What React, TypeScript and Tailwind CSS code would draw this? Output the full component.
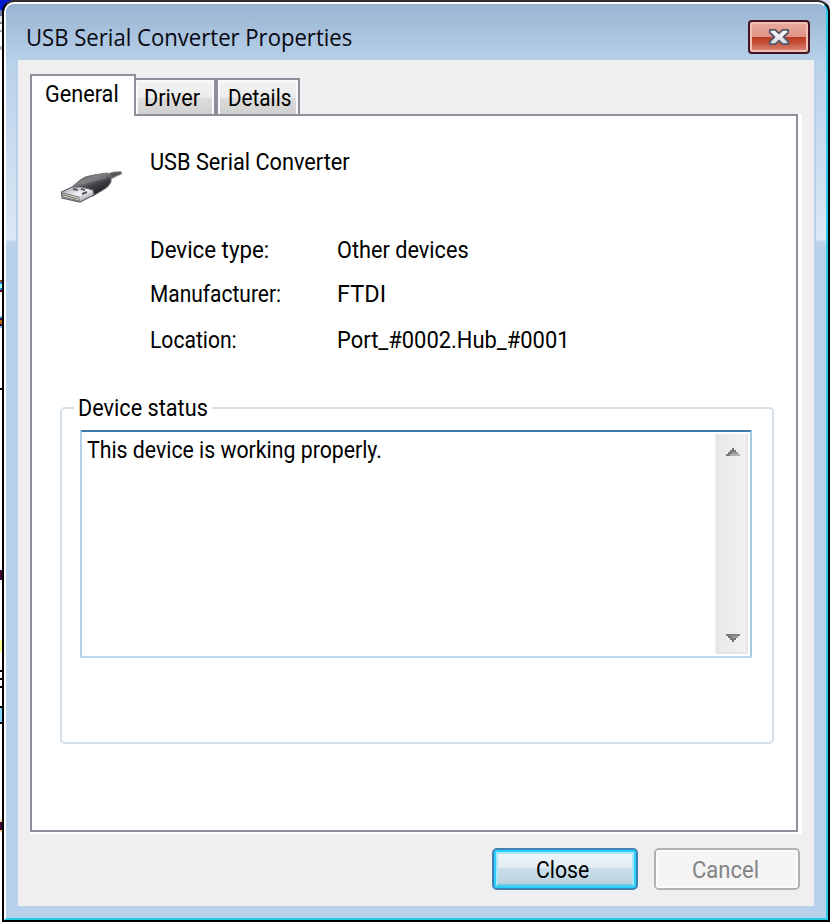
import { useLayoutEffect, useRef, useState } from "react";

const BODY = "font-['Roboto','Liberation_Sans',sans-serif] text-[24px] leading-[28px] text-black";
const TITLE = "font-['Open_Sans','Noto_Sans',sans-serif] text-[24px] leading-[28px] text-[#080810]";

/* One line of text condensed horizontally to a given width. */
function Line({ text, width, className = BODY }: { text: string; width: number; className?: string }) {
  const ref = useRef<HTMLSpanElement>(null);
  const [scale, setScale] = useState(1);
  useLayoutEffect(() => {
    if (ref.current) setScale(width / ref.current.offsetWidth);
  }, [width]);
  return (
    <span className="block h-[28px] shrink-0" style={{ width }}>
      <span
        ref={ref}
        className={"inline-block origin-left whitespace-nowrap " + className}
        style={{ transform: `scaleX(${scale})` }}
      >
        {text}
      </span>
    </span>
  );
}

const EDGE = [
  "h-[10px] bg-[#0018d0]", "h-[6px] bg-[#7078a8]", "h-[6px] bg-[#e4e4e4]", "h-[2px] bg-[#888]",
  "h-[6px] bg-white", "h-[2px] bg-[#aaa]", "h-[14px] bg-white", "h-[4px] bg-[#bbb]", "h-[230px] bg-white",
  "h-[2px] bg-[#984200]", "h-[2px] bg-[#288fe0]", "h-[4px] bg-[#9effff]", "h-[2px] bg-[#288fe0]", "h-[2px] bg-[#680000]",
  "h-[24px] bg-white", "h-[2px] bg-[#68b8ff]", "h-[2px] bg-[#400048]", "h-[4px] bg-[#b86800]", "h-[2px] bg-[#400048]", "h-[2px] bg-[#80c8ff]",
  "h-[60px] bg-white", "h-[2px] bg-black", "h-[180px] bg-white", "h-[10px] bg-[#400030]",
  "h-[60px] bg-white", "h-[12px] bg-[#ffff90]", "h-[18px] bg-white", "h-[2px] bg-black",
  "h-[6px] bg-white", "h-[2px] bg-black", "h-[6px] bg-white", "h-[2px] bg-black",
  "h-[18px] bg-white", "h-[2px] bg-black", "h-[14px] bg-[#88d8ff]", "h-[2px] bg-black",
  "h-[96px] bg-white", "h-[2px] bg-[#ffd090]", "h-[8px] bg-[#400030]", "h-[2px] bg-[#ffd090]",
];

function UsbPlug() {
  return (
    <svg width="64" height="36" viewBox="0 0 64 36" className="shrink-0">
      <defs>
        <linearGradient id="body" x1="0" y1="0" x2="0.6" y2="1">
          <stop offset="0" stopColor="#3d3d40" />
          <stop offset="0.4" stopColor="#848487" />
          <stop offset="0.65" stopColor="#3c3c42" />
          <stop offset="1" stopColor="#202026" />
        </linearGradient>
        <linearGradient id="metal" x1="0" y1="0" x2="1" y2="1">
          <stop offset="0" stopColor="#a0a0a6" />
          <stop offset="0.5" stopColor="#f4f4fa" />
          <stop offset="1" stopColor="#77777e" />
        </linearGradient>
      </defs>
      <path d="M47 6 53 4 61 3.500 62 6 57 8 51 11Z" fill="#55555a" stroke="#aaa" strokeWidth="1" />
      <path d="M12 19 20 12Q25 8 34 7L47 5 51 7 51 14Q49 19 43 22L33 28Z" fill="url(#body)" stroke="#707076" />
      <path d="M1.500 24 12 19 22 19 33 22 34 27 28 30 20 34 2 30Z" fill="url(#metal)" stroke="#606068" strokeWidth="1.200" />
      <path d="m3 25 16 4v4L3 29Z" fill="#c8c8c6" stroke="#606067" strokeWidth=".8" />
      <path d="m13 21 5 1m3-1 4 1m-3 4 5-2" stroke="#57575e" strokeWidth="2" />
      <path d="m4 27 13 4" stroke="#7e7850" />
      <path d="m22 16 16-5 8-2" stroke="#a0a0a3" fill="none" opacity=".5" />
    </svg>
  );
}

function Tab({ text, width, className, pad }: { text: string; width: number; className: string; pad: string }) {
  return (
    <div className={"flex h-[36px] shrink-0 border-t-2 border-[#8c8f9a] " + className}>
      <div className={"flex flex-1 border-x-2 border-t-2 border-[#fafafa] bg-[linear-gradient(to_bottom,#f2f2f2_0%,#ebebeb_48%,#dddddd_50%,#cfcfcf_100%)] pt-[2px] " + pad}>
        <Line text={text} width={width} />
      </div>
    </div>
  );
}

function Field({ label, labelWidth, value, width, className }: { label: string; labelWidth: number; value: string; width: number; className: string }) {
  return (
    <div className={"grid shrink-0 grid-cols-[187px_1fr] pl-[118px] " + className}>
      <Line text={label} width={labelWidth} />
      <Line text={value} width={width} />
    </div>
  );
}

function Arrow({ down = false }: { down?: boolean }) {
  return (
    <svg width="14" height="8" viewBox="0 0 14 8" shapeRendering="crispEdges" className={down ? "-scale-y-100" : ""}>
      <path d="M6 0h2v2H6z" fill="#737373" />
      <path d="M4 2h6v2H4z" fill="#777" />
      <path d="M2 4h10v2H2z" fill="#999" />
      <path d="M0 6h14v2H0z" fill={down ? "#808080" : "#b2b2b2"} />
      <path d="M0 6h4v2H0zM2 4h4v2H2z" fill="#777" />
    </svg>
  );
}

function SideGlass({ right = false }: { right?: boolean }) {
  return (
    <div className={"w-[12px] shrink-0 " + (right ? "pl-[2px]" : "pr-[2px]")}>
      <div className="h-[182px] border-b-2 border-[#c8dcf0] bg-linear-to-b from-[#b9d1ea] to-[#dce8f5]" />
    </div>
  );
}

export default function App() {
  return (
    <div className="flex h-[924px] w-[830px] overflow-hidden bg-white">
      <div className="flex w-[2px] shrink-0 flex-col">
        {EDGE.map((c, i) => <div key={i} className={"shrink-0 " + c} />)}
      </div>
      <div className="h-[922px] w-[828px] bg-linear-to-r from-[#0018d0] from-50% to-[#dcdcf4] to-50%">
        <div className="h-full rounded-t-[12px] border-2 border-black border-t-[#332f31] bg-black">
          <div className="flex h-full flex-col rounded-t-[10px] border-2 border-t-white border-r-[#2bcbed] border-b-[#27cbe0] border-l-white bg-[#b9d1ea]">
            <header className="flex h-[56px] shrink-0 items-start justify-between rounded-t-[8px] bg-linear-to-b from-[#99b4d1] to-[#b7cfe9] pl-[20px] pr-[16px]">
              <div className="pt-[19px]">
                <Line text="USB Serial Converter Properties" width={326} className={TITLE} />
              </div>
              <button className="mt-[16px] h-[34px] w-[62px] rounded-[4px] border-2 border-[#431522] bg-[#431522]">
                <span className="flex h-full w-full items-center justify-center rounded-[2px] border-2 border-[#efc0b5] bg-[linear-gradient(to_bottom,#e8a79b_0%,#df9487_48%,#b93b22_50%,#c64e36_72%,#d98270_100%)]">
                  <svg width="22" height="18" viewBox="0 0 24 20" preserveAspectRatio="none">
                    <defs><linearGradient id="cross" x1="0" y1="0" x2="0" y2="1"><stop stopColor="#fff" /><stop offset="1" stopColor="#d7d7dc" /></linearGradient></defs>
                    <path d="M2 2h6l4 4 4-4h6v3l-5 5 5 5v3h-6l-4-4-4 4H2v-3l5-5-5-5Z" fill="url(#cross)" stroke="#555a6b" strokeWidth="2" strokeLinejoin="round" />
                  </svg>
                </span>
              </button>
            </header>
            <div className="flex h-[846px] shrink-0">
              <SideGlass />
              <main className="flex w-[796px] shrink-0 flex-col bg-[#efefef] pl-[12px] pt-[14px]">
                <div className="flex h-[40px] shrink-0 items-end">
                  <div className="z-10 -mb-[2px] h-[42px] w-[106px] border-x-2 border-t-2 border-[#8c8f9a] bg-white pl-[13px] pt-[4px]">
                    <Line text="General" width={74} />
                  </div>
                  <Tab text="Driver" width={56} className="w-[80px] border-r-2" pad="pl-[6px]" />
                  <Tab text="Details" width={63} className="w-[84px] border-x-2" pad="pl-[8px]" />
                </div>
                <div className="h-[720px] w-[772px] shrink-0 bg-white">
                  <section className="flex h-[718px] w-[768px] flex-col border-2 border-[#8c8f9a] bg-white">
                    <div className="flex h-[120px] shrink-0 pl-[28px] pt-[32px]">
                      <div className="w-[90px] pt-[20px]"><UsbPlug /></div>
                      <Line text="USB Serial Converter" width={200} />
                    </div>
                    <Field label="Device type:" labelWidth={119} value="Other devices" width={132} className="h-[44px]" />
                    <Field label="Manufacturer:" labelWidth={131} value="FTDI" width={49} className="h-[46px]" />
                    <Field label="Location:" labelWidth={87} value="Port_#0002.Hub_#0001" width={233} className="h-[68px]" />
                    <fieldset className="ml-[28px] h-[350px] w-[714px] shrink-0 rounded-[5px] border-2 border-[#d5dfe8] pl-[18px]">
                      <legend className="-ml-[6px] h-[28px] pl-[4px] pr-[4px]"><Line text="Device status" width={130} /></legend>
                      <div className="mt-[8px] flex h-[228px] w-[672px] justify-between rounded-[2px] border-2 border-[#b5cfe7] border-r-[#a4c9e3] border-b-[#b7d9ed] border-t-[#3d7bad] pl-[5px] pr-[2px]">
                        <div className="pt-[4px]"><Line text="This device is working properly." width={295} /></div>
                        <div className="mt-[2px] h-[220px] w-[34px] border-l-2 border-[#f8f8f8] bg-[#efefef]">
                          <div className="flex h-full w-[32px] flex-col items-center justify-between border-b-2 border-l-2 border-r-2 border-l-[#e3e3e3] border-r-[#e5e5e5] border-b-[#e5e5e5] bg-linear-to-r from-[#e9e9e9] to-[#f1f1f1] pb-[10px] pl-[2px] pt-[14px]">
                            <Arrow /><Arrow down />
                          </div>
                        </div>
                      </div>
                    </fieldset>
                  </section>
                </div>
                <footer className="flex gap-[16px] pl-[462px] pt-[14px]">
                  <button className="h-[42px] w-[146px] shrink-0 rounded-[5px] border-2 border-[#4081b3] bg-[#2dcbf6]">
                    <span className="block h-full w-full rounded-[3px] border-2 border-[#2bcffb]">
                      <span className="flex h-full w-full items-center justify-center border-2 border-[#a9e8fa] border-b-[#67cbe8] bg-[linear-gradient(to_bottom,#edf5f9_0%,#e2edf3_46%,#cadfe9_48%,#b9d3df_100%)] pr-[5px] pt-[2px]">
                        <Line text="Close" width={53} />
                      </span>
                    </span>
                  </button>
                  <button className="h-[42px] w-[146px] shrink-0 rounded-[5px] border-2 border-[#adb2b5] bg-[#f4f4f4]">
                    <span className="flex h-full w-full items-center justify-center rounded-[3px] border-2 border-[#fcfcfc] pr-[3px] pt-[2px]">
                      <Line text="Cancel" width={67} className="font-['Roboto','Liberation_Sans',sans-serif] text-[24px] leading-[28px] text-[#838383]" />
                    </span>
                  </button>
                </footer>
              </main>
              <SideGlass right />
            </div>
          </div>
        </div>
      </div>
    </div>
  );
}
